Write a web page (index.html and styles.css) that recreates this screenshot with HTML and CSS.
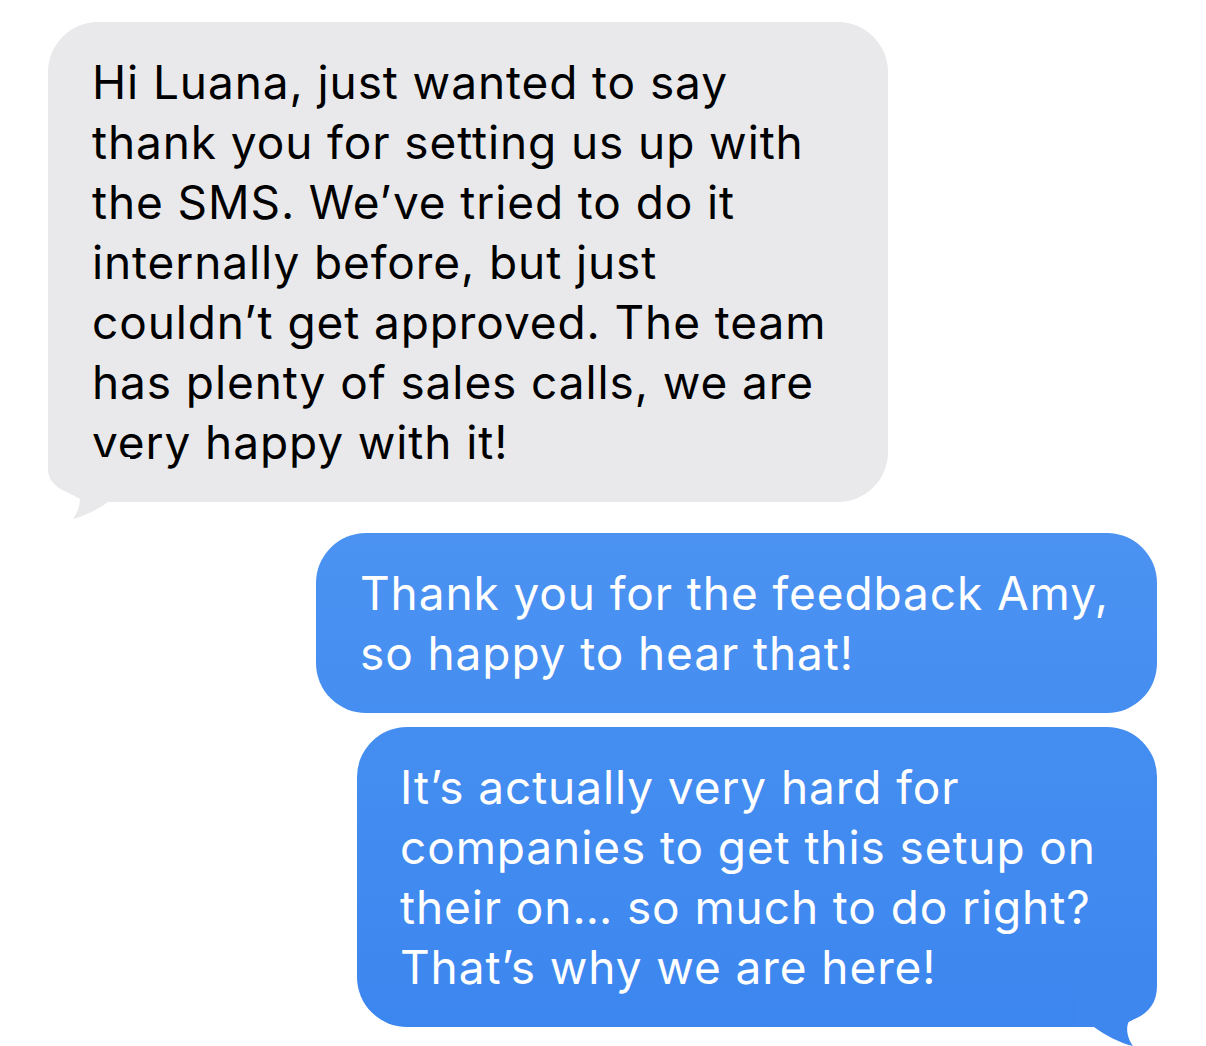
FILE: index.html
```html
<!DOCTYPE html>
<html lang="en">
<head>
    <meta charset="UTF-8">
    <meta name="viewport" content="width=device-width, initial-scale=1.0">
    <title>Messages</title>
    <link rel="stylesheet" href="styles.css">
</head>
<body>
    <div class="thread">
        <div class="bubble received">
            Hi Luana, just wanted to say<br>
            thank you for setting us up with<br>
            the SMS. We’ve tried to do it<br>
            internally before, but just<br>
            couldn’t get approved. The team<br>
            has plenty of sales calls, we are<br>
            very happy with it!
            <svg class="tail tail-left" width="90" height="65" viewBox="0 0 90 65">
                <path d="M8 0 L8 12 C8 26 20 34 40 40 C40 50 37 56 33 62 C48 58 62 50 72 42 L90 42 L90 0 Z" fill="#e9e9eb"/>
            </svg>
        </div>
        <div class="bubble sent first">
            Thank you for the feedback Amy,<br>
            so happy to hear that!
        </div>
        <div class="bubble sent last">
            It’s actually very hard for<br>
            companies to get this setup on<br>
            their on… so much to do right?<br>
            That’s why we are here!
            <svg class="tail tail-right" width="90" height="85" viewBox="0 0 90 85">
                <path d="M82 0 L82 25 C82 45 70 55 54 60 C50 68 53 78 58 85 C45 82 30 74 19 66 L0 66 L0 0 Z" fill="#3d87ef"/>
            </svg>
        </div>
    </div>
</body>
</html>
```

FILE: styles.css
```css
body {
    margin: 0;
    background: #ffffff;
    font-family: Inter, "Noto Sans", sans-serif;
}
.thread {
    display: flex;
    flex-direction: column;
    padding: 22px 49px 20px 48px;
}
.bubble {
    position: relative;
    box-sizing: border-box;
    font-size: 46px;
    line-height: 60px;
    letter-spacing: 0.9px;
    padding: 30px 0 30px 44px;
    border-radius: 50px;
    white-space: nowrap;
}
.received {
    align-self: flex-start;
    width: 840px;
    background: #e9e9eb;
    color: #000000;
}
.sent {
    align-self: flex-end;
    color: #ffffff;
    background: linear-gradient(to bottom, #4c93f2 500px, #3b86ef 1046px);
    background-attachment: fixed;
}
.sent.first {
    width: 841px;
    margin-top: 31px;
}
.sent.last {
    width: 800px;
    margin-top: 14px;
    padding-left: 43px;
}
.tail {
    position: absolute;
    display: block;
    z-index: 1;
}
.tail-left {
    left: -8px;
    bottom: -20px;
}
.tail-right {
    right: -8px;
    bottom: -19px;
}
```
